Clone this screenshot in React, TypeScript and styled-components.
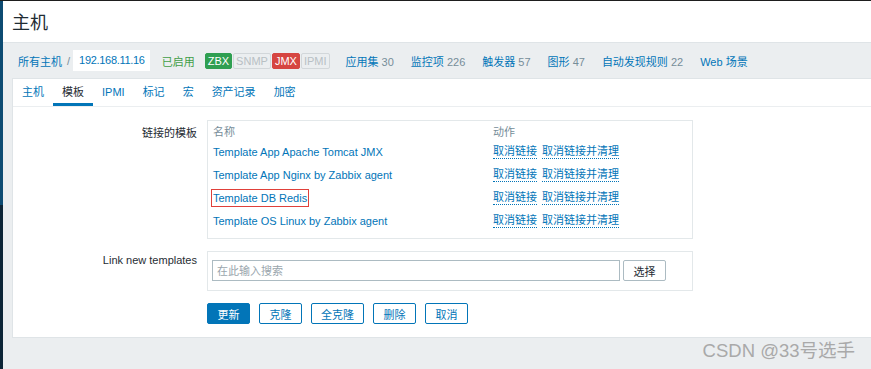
import styled, { createGlobalStyle } from "styled-components";

const GlobalStyle = createGlobalStyle`
  html, body {
    margin: 0;
    padding: 0;
    background: #ebeef0;
    overflow: hidden;
  }
  body {
    font-family: "Liberation Sans", Arial, "Noto Sans CJK SC", sans-serif;
    font-size: 11px;
    color: #1f2c33;
  }
  * { box-sizing: border-box; }
`;

const templates = [
  "Template App Apache Tomcat JMX",
  "Template App Nginx by Zabbix agent",
  "Template DB Redis",
  "Template OS Linux by Zabbix agent",
];

const counts = [
  { name: "应用集", n: "30" },
  { name: "监控项", n: "226" },
  { name: "触发器", n: "57" },
  { name: "图形", n: "47" },
  { name: "自动发现规则", n: "22" },
];

const tabs = ["主机", "模板", "IPMI", "标记", "宏", "资产记录", "加密"];

const App = () => {
  return (
    <Page>
      <GlobalStyle />
      <Shell>
        <Sidebar />
        <Main>
          <Header>
            <Title>主机</Title>
          </Header>
          <Body>
            <Crumbs>
              <CrumbLink>所有主机</CrumbLink>
              <Sep>/</Sep>
              <HostBox>192.168.11.16</HostBox>
              <Enabled>已启用</Enabled>
              <Badges>
                <Badge kind="green">ZBX</Badge>
                <Badge kind="off">SNMP</Badge>
                <Badge kind="red">JMX</Badge>
                <Badge kind="off">IPMI</Badge>
              </Badges>
              {counts.map((c) => (
                <CountLink key={c.name}>
                  {c.name} <Num>{c.n}</Num>
                </CountLink>
              ))}
              <CountLink>Web 场景</CountLink>
            </Crumbs>
            <Panel>
              <Tabs>
                {tabs.map((t) => (
                  <Tab key={t} active={t === "模板"}>
                    {t}
                  </Tab>
                ))}
              </Tabs>
              <Form>
                <Label>链接的模板</Label>
                <Box>
                  <TableRow head>
                    <NameCell>名称</NameCell>
                    <div>动作</div>
                  </TableRow>
                  {templates.map((t) => (
                    <TableRow key={t}>
                      <NameCell>
                        {t === "Template DB Redis" ? (
                          <Marked>{t}</Marked>
                        ) : (
                          <Link>{t}</Link>
                        )}
                      </NameCell>
                      <Actions>
                        <Dotted>取消链接</Dotted>
                        <Dotted>取消链接并清理</Dotted>
                      </Actions>
                    </TableRow>
                  ))}
                </Box>

                <Label small>Link new templates</Label>
                <SearchBox>
                  <Input placeholder="在此输入搜索" />
                  <SelectBtn>选择</SelectBtn>
                </SearchBox>

                <span />
                <Buttons>
                  <Btn primary>更新</Btn>
                  <Btn>克隆</Btn>
                  <Btn>全克隆</Btn>
                  <Btn>删除</Btn>
                  <Btn>取消</Btn>
                </Buttons>
              </Form>
            </Panel>
          </Body>
        </Main>
      </Shell>
      <Watermark>CSDN @33号选手</Watermark>
    </Page>
  );
};
export default App;

const Page = styled.div`
  position: relative;
  height: 369px;
  border-top: 1px solid #1e1e1e;
  overflow: hidden;
`;

const Shell = styled.div`
  display: flex;
  height: 100%;
`;

const Sidebar = styled.div`
  width: 3px;
  flex: none;
  background: linear-gradient(
    to bottom,
    #0d4b72 0,
    #0d4b72 204px,
    #0c2537 204px,
    #0c2537 100%
  );
`;

const Main = styled.div`
  flex: 1;
  display: flex;
  flex-direction: column;
  min-width: 0;
`;

const Header = styled.div`
  height: 42px;
  background: #ffffff;
  border-bottom: 1px solid #dfe4e7;
  padding: 0 0 0 9px;
  display: flex;
  align-items: center;
`;

const Title = styled.h1`
  margin: 0;
  font-size: 18px;
  font-weight: normal;
  color: #1f2c33;
  font-family: "Noto Sans CJK SC", sans-serif;
  line-height: 1;
  margin-top: -2px;
`;

const Body = styled.div`
  flex: 1;
  background: #ebeef0;
  padding-left: 9px;
`;

const Crumbs = styled.div`
  height: 35px;
  display: flex;
  align-items: center;
  padding-left: 6px;
  white-space: nowrap;
`;

const CrumbLink = styled.span`
  color: #0275b8;
`;

const Sep = styled.span`
  color: #768d99;
  margin: 0 3px 0 5px;
`;

const HostBox = styled.span`
  background: #ffffff;
  height: 21px;
  line-height: 21px;
  padding: 0 5px 0 6px;
  color: #0275b8;
  font-size: 11px;
  letter-spacing: -0.3px;
`;

const Enabled = styled.span`
  color: #429e47;
  margin-left: 12px;
`;

const Badges = styled.span`
  display: flex;
  margin-left: 10px;
  margin-right: 16px;
`;

const Badge = styled.span<{ kind: "green" | "red" | "off" }>`
  height: 16px;
  line-height: 14px;
  padding: 0 2px;
  border: 1px solid
    ${(p) => (p.kind === "green" ? "#2f9f51" : p.kind === "red" ? "#d64541" : "#d2d7da")};
  background: ${(p) =>
    p.kind === "green" ? "#2f9f51" : p.kind === "red" ? "#d64541" : "#ebeef0"};
  color: ${(p) => (p.kind === "off" ? "#b8c0c4" : "#ffffff")};
  font-size: 11px;
  border-radius: 2px;
  & + & {
    margin-left: 1px;
  }
`;

const CountLink = styled.span`
  color: #0275b8;
  margin-right: 17px;
`;

const Num = styled.span`
  color: #768d99;
`;

const Panel = styled.div`
  background: #ffffff;
  border: 1px solid #dfe4e7;
  margin-right: -10px;
  height: 260px;
`;

const Tabs = styled.div`
  display: flex;
  height: 28px;
  border-bottom: 1px solid #ebeef0;
`;

const Tab = styled.div<{ active?: boolean }>`
  padding: 1px 9px 0;
  line-height: 24px;
  color: ${(p) => (p.active ? "#1f2c33" : "#0275b8")};
  border-bottom: 3px solid ${(p) => (p.active ? "#0275b8" : "transparent")};
`;

const Form = styled.div`
  display: grid;
  grid-template-columns: 184px 486px;
  column-gap: 10px;
  row-gap: 12px;
  padding-top: 13px;
  & > :nth-child(5) {
    margin-top: 1px;
  }
`;

const Label = styled.div<{ small?: boolean }>`
  text-align: right;
  padding-top: ${(p) => (p.small ? "3px" : "4px")};
  color: #1f2c33;
`;

const Box = styled.div`
  border: 1px solid #e3e8ea;
  padding: 0 5px 6px;
`;

const TableRow = styled.div<{ head?: boolean }>`
  display: flex;
  height: ${(p) => (p.head ? "19px" : "23px")};
  align-items: center;
  color: ${(p) => (p.head ? "#768d99" : "inherit")};
`;

const NameCell = styled.div`
  width: 280px;
`;

const Link = styled.span`
  color: #0275b8;
`;

const Marked = styled.span`
  color: #0275b8;
  border: 1px solid #e0403a;
  padding: 2px 1px;
  margin-left: -2px;
`;

const Actions = styled.div`
  display: flex;
  gap: 5px;
`;

const Dotted = styled.span`
  color: #0275b8;
  border-bottom: 1px dotted #0275b8;
  line-height: 14px;
`;

const SearchBox = styled.div`
  border: 1px solid #e3e8ea;
  padding: 8px 5px 9px 4px;
  display: flex;
  gap: 3px;
`;

const Input = styled.input`
  width: 408px;
  height: 21px;
  border: 1px solid #acbbc2;
  padding: 0 4px;
  font: inherit;
  font-size: 11px;
  color: #1f2c33;
  outline: none;
  &::placeholder {
    color: #9aa6ad;
  }
`;

const SelectBtn = styled.button`
  width: 43px;
  height: 21px;
  border: 1px solid #acbbc2;
  border-radius: 2px;
  background: #ffffff;
  color: #1f2c33;
  font: inherit;
  padding: 0;
`;

const Buttons = styled.div`
  display: flex;
  gap: 9px;
`;

const Btn = styled.button<{ primary?: boolean }>`
  height: 21px;
  padding: 0 9px;
  min-width: 43px;
  border: 1px solid #0275b8;
  border-radius: 2px;
  background: ${(p) => (p.primary ? "#0275b8" : "#ffffff")};
  color: ${(p) => (p.primary ? "#ffffff" : "#0275b8")};
  font: inherit;
  font-size: 11px;
`;

const Watermark = styled.div`
  position: absolute;
  right: 16px;
  bottom: 7px;
  font-size: 18.5px;
  color: #a9a9a9;
  font-family: "Liberation Sans", "Noto Sans CJK SC", sans-serif;
`;
